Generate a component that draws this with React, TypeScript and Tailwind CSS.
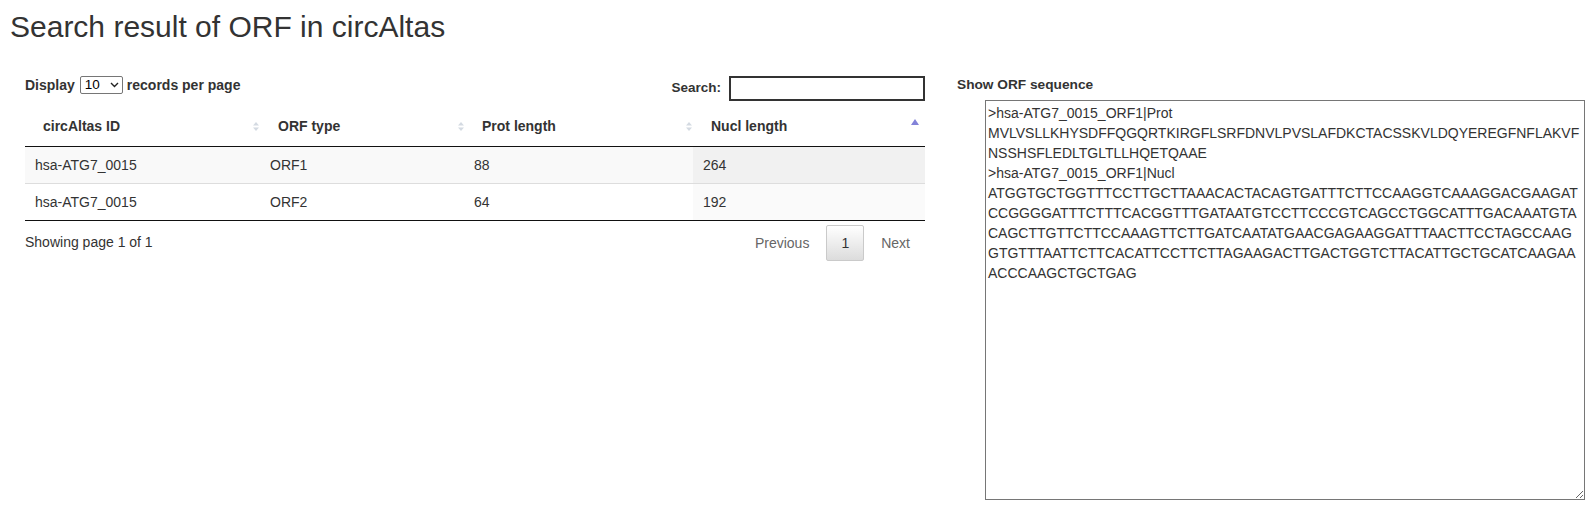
import React from "react";

const seq = `>hsa-ATG7_0015_ORF1|Prot
MVLVSLLKHYSDFFQGQRTKIRGFLSRFDNVLPVSLAFDKCTACSSKVLDQYEREGFNFLAKVF
NSSHSFLEDLTGLTLLHQETQAAE
>hsa-ATG7_0015_ORF1|Nucl
ATGGTGCTGGTTTCCTTGCTTAAACACTACAGTGATTTCTTCCAAGGTCAAAGGACGAAGAT
CCGGGGATTTCTTTCACGGTTTGATAATGTCCTTCCCGTCAGCCTGGCATTTGACAAATGTA
CAGCTTGTTCTTCCAAAGTTCTTGATCAATATGAACGAGAAGGATTTAACTTCCTAGCCAAG
GTGTTTAATTCTTCACATTCCTTCTTAGAAGACTTGACTGGTCTTACATTGCTGCATCAAGAA
ACCCAAGCTGCTGAG`;

function SortBoth() {
  return (
    <svg width="6" height="9" viewBox="0 0 6 9" className="shrink-0">
      <path d="M3 0 L6 3.5 L0 3.5 Z" fill="#d4dae2" />
      <path d="M3 9 L6 5.5 L0 5.5 Z" fill="#d4dae2" />
    </svg>
  );
}

function SortAsc() {
  return (
    <svg width="8" height="6" viewBox="0 0 8 6" className="shrink-0">
      <path d="M4 0 L8 6 L0 6 Z" fill="#8383d9" />
    </svg>
  );
}

export default function App() {
  const rows = [
    { id: "hsa-ATG7_0015", type: "ORF1", prot: "88", nucl: "264" },
    { id: "hsa-ATG7_0015", type: "ORF2", prot: "64", nucl: "192" },
  ];
  return (
    <div className="font-['Liberation_Sans',Arial,sans-serif] text-[#333] bg-white min-h-[517px]">
      <h1 className="text-[30px] leading-[33px] pl-[10px] pt-[10px] font-normal">
        Search result of ORF in circAltas
      </h1>
      <div className="flex mt-[33px]">
        <div className="ml-[25px] w-[900px]">
          <div className="flex justify-between items-start">
            <div className="h-[18px] flex items-center text-[14px] font-bold">
              <span>Display</span>
              <div className="ml-[5px] w-[43px] h-[18px] border border-[#767676] rounded-[2px] flex items-center pl-[4px] pr-[3px] justify-between font-normal text-[13.5px] text-black">
                <span>10</span>
                <svg width="9" height="6" viewBox="0 0 9 6">
                  <path d="M1 1 L4.5 4.5 L8 1" stroke="#222" strokeWidth="1.4" fill="none" />
                </svg>
              </div>
              <span className="ml-[4px]">records per page</span>
            </div>
            <div className="h-[25px] flex items-center text-[13.5px] font-bold">
              <span>Search:</span>
              <div className="ml-[8px] w-[196px] h-[25px] border-2 border-[#333] bg-white" />
            </div>
          </div>
          <table className="mt-[5px] w-[900px] table-fixed border-collapse text-[14px] leading-[20px]">
            <colgroup>
              <col className="w-[235px]" />
              <col className="w-[204px]" />
              <col className="w-[229px]" />
              <col className="w-[232px]" />
            </colgroup>
            <thead>
              <tr className="border-b border-[#111]">
                <th className="text-left font-bold pl-[18px] pr-[1px] py-[10px]">
                  <div className="flex items-center justify-between">
                    <span>circAltas ID</span>
                    <SortBoth />
                  </div>
                </th>
                <th className="text-left font-bold pl-[18px] pr-[0px] py-[10px]">
                  <div className="flex items-center justify-between">
                    <span>ORF type</span>
                    <SortBoth />
                  </div>
                </th>
                <th className="text-left font-bold pl-[18px] pr-[1px] py-[10px]">
                  <div className="flex items-center justify-between">
                    <span>Prot length</span>
                    <SortBoth />
                  </div>
                </th>
                <th className="text-left font-bold pl-[18px] pr-[6px] py-[10px]">
                  <div className="flex items-center justify-between">
                    <span>Nucl length</span>
                    <span className="-mt-[9px]">
                      <SortAsc />
                    </span>
                  </div>
                </th>
              </tr>
            </thead>
            <tbody>
              {rows.map((r, i) => (
                <tr
                  key={i}
                  className={
                    i === 0
                      ? "bg-[#f9f9f9]"
                      : "bg-white border-t border-[#ddd] border-b border-b-[#111]"
                  }
                >
                  <td className="px-[10px] py-[8px]">{r.id}</td>
                  <td className="px-[10px] py-[8px]">{r.type}</td>
                  <td className="px-[10px] py-[8px]">{r.prot}</td>
                  <td className={"px-[10px] py-[8px] " + (i === 0 ? "bg-[#f1f1f1]" : "bg-[#fafafa]")}>
                    {r.nucl}
                  </td>
                </tr>
              ))}
            </tbody>
          </table>
          <div className="flex justify-between items-start text-[14px] leading-[20px]">
            <div className="pt-[11px]">Showing page 1 of 1</div>
            <div className="flex items-start mt-[4px]">
              <span className="px-[14px] py-[7px] border border-transparent text-[#666]">Previous</span>
              <span className="ml-[2px] px-[14px] py-[7px] border border-[#cacaca] rounded-[2px] bg-linear-to-b from-white to-[#dcdcdc] text-[#333]">
                1
              </span>
              <span className="ml-[2px] px-[14px] py-[7px] border border-transparent text-[#666]">Next</span>
            </div>
          </div>
        </div>
        <div className="ml-[32px]">
          <div className="h-[18px] leading-[18px] text-[13.7px] font-bold">Show ORF sequence</div>
          <textarea
            readOnly
            defaultValue={seq}
            className="block mt-[6px] ml-[28px] w-[600px] h-[400px] border border-[#767676] p-[2px] text-[14px] leading-[20px] text-[#333] font-['Liberation_Sans',Arial,sans-serif] resize bg-white outline-none"
          />
        </div>
      </div>
    </div>
  );
}
